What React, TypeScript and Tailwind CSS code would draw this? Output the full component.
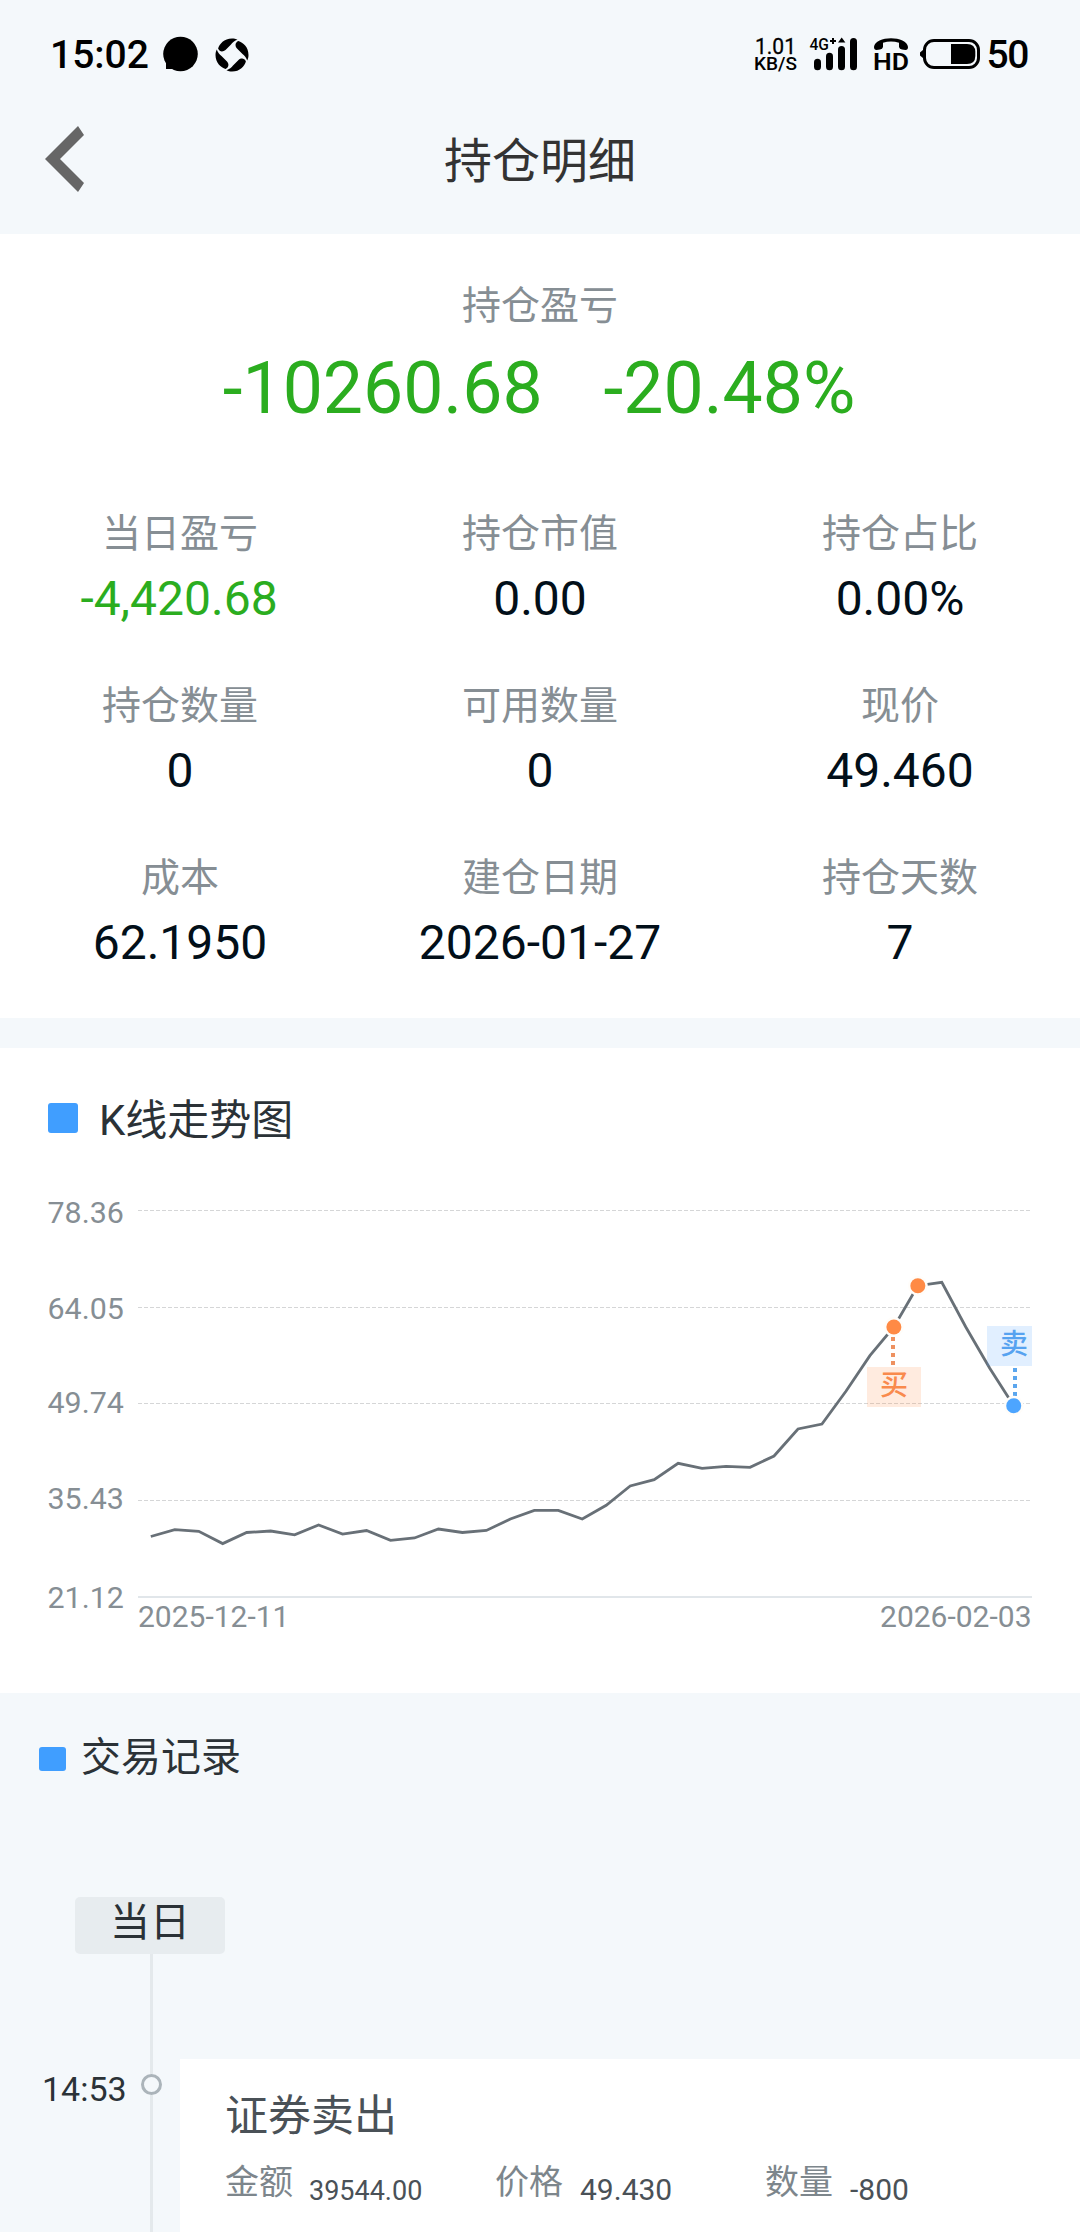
import React from "react";

const FONT = "font-['Roboto','Noto_Sans_CJK_SC',sans-serif]";

type Stat = { label: string; value: string; green?: boolean };

const STATS: Stat[] = [
  { label: "当日盈亏", value: "-4,420.68", green: true },
  { label: "持仓市值", value: "0.00" },
  { label: "持仓占比", value: "0.00%" },
  { label: "持仓数量", value: "0" },
  { label: "可用数量", value: "0" },
  { label: "现价", value: "49.460" },
  { label: "成本", value: "62.1950" },
  { label: "建仓日期", value: "2026-01-27" },
  { label: "持仓天数", value: "7" },
];

// Vertical position of each daily close, one every 24px.
const CLOSES = [
  1536.5, 1529.7, 1531.3, 1543.6, 1532.5, 1531, 1534.9, 1525, 1534.1, 1530.5, 1540.4, 1538, 1529,
  1532.5, 1530.5, 1519, 1510.4, 1510.4, 1519, 1505.3, 1486, 1479.7, 1463.3, 1468.3, 1466.3, 1467.3,
  1456, 1429, 1424, 1391.3, 1355.7, 1327, 1285.7, 1282.3, 1327, 1368.3, 1405.7,
];
const closeX = (i: number) => 150.8 + i * 23.97;

const AXIS = [
  { text: "78.36", base: 1223, line: 1210.5 },
  { text: "64.05", base: 1319, line: 1307.5 },
  { text: "49.74", base: 1413, line: 1403.5 },
  { text: "35.43", base: 1509, line: 1500.5 },
];

function StatusBar() {
  return (
    <div className="flex h-[84px] items-start justify-between pl-[50px] pr-[50px] pt-[30px] text-black">
      <div className="flex h-12 items-center">
        <span className="w-[98px] pt-px text-[39px] font-medium leading-[48px]">15:02</span>
        <svg width="36" height="36" viewBox="0 0 36 36" className="ml-[14px]">
          <circle cx="18.5" cy="18" r="17.3" />
          <path d="M4 22V33H20Z" />
        </svg>
        <svg width="34" height="34" viewBox="-17 -17 34 34" className="ml-[17px] mt-px">
          {[0, 90, 180, 270].map((a) => (
            <path
              key={a}
              transform={`rotate(${a})`}
              d="M5.5-15.2C2.5-14.3 0.5-12.5-1-10.5L-6.5-5C-9-2.8-12.5-3-13.9-6.4C-12.5-11-8-16.5 0-16.5C2-16.5 4-16 5.5-15.2Z"
            />
          ))}
        </svg>
      </div>
      <svg width="280" height="48" viewBox="750 30 280 48" className={FONT}>
        <text x="755" y="54" fontSize="21.5" fontWeight="400" stroke="#000" strokeWidth=".3" textLength="41" lengthAdjust="spacingAndGlyphs">1.01</text>
        <text x="754" y="70" fontSize="18.7" fontWeight="500" textLength="43" lengthAdjust="spacingAndGlyphs">KB/S</text>
        <text x="809.5" y="50" fontSize="17" fontWeight="500" textLength="19.5" lengthAdjust="spacingAndGlyphs">4G</text>
        <path d="M830 41h6M833 38v6" stroke="#000" strokeWidth="2" />
        <path d="M838 42.5L841.7 37.5L845.4 42.5Z" />
        <rect x="814" y="58.7" width="7" height="11.5" rx="3.5" />
        <rect x="826" y="52.7" width="7" height="17.5" rx="3.5" />
        <rect x="838" y="46" width="7" height="24.2" rx="3.5" />
        <rect x="850" y="38" width="7" height="32.2" rx="3.5" />
        <path d="M874 47C875 35.200 907 35.200 908 47Q908 50 905.500 50L902 49.500Q899.500 49 899 47V42.800Q891 40 883 42.800V47Q882.500 49 880 49.500L876.500 50Q874 50 874 47Z" />
        <text x="873" y="70" fontSize="24.5" fontWeight="600" textLength="36" lengthAdjust="spacingAndGlyphs">HD</text>
        <rect x="924.5" y="40.5" width="54" height="27" rx="9.5" fill="none" stroke="#000" strokeWidth="3" />
        <path d="M923.5 49.5L920 52.5V55.5L923.5 58.5Z" />
        <path d="M951 44H967Q975.3 44 975.3 52V56Q975.3 64 967 64H951Z" />
        <text x="986.5" y="67.5" fontSize="39" fontWeight="500" textLength="43">50</text>
      </svg>
    </div>
  );
}

function NavBar() {
  return (
    <div className="grid h-[150px] grid-cols-3 items-center">
      <svg width="39" height="66" viewBox="0 0 39 66" className="ml-[45px]" fill="#666">
        <path d="M33 0L39 9L15 33L39 57L33 66L0 33Z" />
      </svg>
      <h1 className="pt-[5px] text-center text-[48px] leading-[60px] text-[#333]">持仓明细</h1>
    </div>
  );
}

function Summary() {
  return (
    <section className="bg-white pb-[41px] pt-[42px] text-center">
      <div className="text-[39px] leading-[60px] text-[#868e94]">持仓盈亏</div>
      <div className="mt-[11px] flex justify-center gap-[61px] pr-[2px] text-[71.5px] leading-[84px] text-[#2bad1f]">
        <span>-10260.68</span>
        <span>-20.48%</span>
      </div>
      <div className="mt-[73px] grid grid-cols-3 gap-y-[43px]">
        {STATS.map((s) => (
          <div key={s.label}>
            <div className="text-[39px] leading-[60px] text-[#868e94]">{s.label}</div>
            <div
              className={`mt-px text-[48px] leading-[68px] ${s.green ? "pr-[2px] text-[#2bad1f]" : "text-[#020f19]"}`}
            >
              {s.value}
            </div>
          </div>
        ))}
      </div>
    </section>
  );
}

function Marker({ i, color }: { i: number; color: string }) {
  return (
    <>
      <circle cx={closeX(i)} cy={CLOSES[i]} r="10" fill="#fffdfa" />
      <circle cx={closeX(i)} cy={CLOSES[i]} r="7.5" fill={color} />
    </>
  );
}

function PriceChart() {
  const points = CLOSES.map((y, i) => `${closeX(i)},${y}`).join(" ");
  return (
    <svg width="1080" height="545" viewBox="0 1148 1080 545" className={`block ${FONT}`} fontSize="30" fill="#868e94">
      {AXIS.map((a) => (
        <g key={a.text}>
          <text x="47.5" y={a.base} fontSize="30.4">{a.text}</text>
          <line x1="138" x2="1030" y1={a.line} y2={a.line} stroke="#d5d6d7" strokeDasharray="4 2" />
        </g>
      ))}
      <text x="47.5" y="1608" fontSize="30.4">21.12</text>
      <rect x="138" y="1596" width="894" height="2" fill="#e1e6ea" />
      <text x="138" y="1627">2025-12-11</text>
      <text x="1031.5" y="1627" textAnchor="end">2026-02-03</text>
      <polyline points={points} fill="none" stroke="#687077" strokeWidth="2.8" />
      <rect x="867" y="1367" width="54" height="40" fill="#ff8a42" fillOpacity=".17" />
      <rect x="987" y="1326" width="45" height="40" fill="#4ba3ff" fillOpacity=".17" />
      <line x1="893" x2="893" y1="1337" y2="1366" stroke="#ee9160" strokeWidth="4" strokeDasharray="4 4" />
      <line x1="1015" x2="1015" y1="1368" y2="1397" stroke="#5ba6ee" strokeWidth="4" strokeDasharray="4 4" />
      <Marker i={31} color="#ff8a45" />
      <Marker i={32} color="#ff8a45" />
      <Marker i={36} color="#4da5ff" />
      <text x="894" y="1395" fontSize="28" fontWeight="500" fill="#f98a4d" textAnchor="middle">买</text>
      <text x="1014" y="1354" fontSize="28" fontWeight="500" fill="#56a2f0" textAnchor="middle">卖</text>
    </svg>
  );
}

function KLine() {
  return (
    <section className="mt-[30px] bg-white">
      <div className="flex h-[100px] items-start pl-12 pt-[55px]">
        <span className="h-[30px] w-[30px] rounded-[3px] bg-[#409eff]" />
        <h2 className="-mt-[12px] ml-[21px] text-[42px] leading-[60px] text-[#2b3237]">K线走势图</h2>
      </div>
      <PriceChart />
    </section>
  );
}

function Field({ label, value, small }: { label: string; value: string; small?: boolean }) {
  return (
    <div className="flex w-[270px] items-start">
      <span className="text-[34px] leading-[46px] text-[#7d868c]">{label}</span>
      <span
        className={
          small ? "ml-4 pt-[9px] text-[27px] leading-[46px]" : "ml-[17px] pt-[8px] text-[30px] leading-[46px]"
        }
      >
        {value}
      </span>
    </div>
  );
}

function Records() {
  return (
    <section className="flex flex-1 flex-col">
      <div className="flex h-[204px] items-start pl-[39px] pt-[54px]">
        <span className="h-6 w-[27px] rounded-[3px] bg-[#409eff]" />
        <h2 className="-mt-[19px] ml-[15px] text-[40px] leading-[60px] text-[#2b3237]">交易记录</h2>
      </div>
      <div className="ml-[75px] h-[57px] w-[150px] rounded-[5px] bg-[#e7ecef] text-center text-[40px] leading-[52px] text-[#2b3237]">
        当日
      </div>
      <div className="flex flex-1">
        <div className="w-[141px] pl-[42px] pt-[115px] text-[34px] leading-[40px] text-[#2b3237]">14:53</div>
        <div className="flex w-[21px] flex-col items-center">
          <div className="h-[120px] w-[3px] bg-[#e4e9ec]" />
          <div className="h-[21px] w-[21px] rounded-full border-[3px] border-[#abb4ba]" />
          <div className="w-[3px] flex-1 bg-[#e4e9ec]" />
        </div>
        <div className="ml-[18px] mt-[105px] flex-1 bg-white pl-[45px] pt-[27px] text-[#4a5157]">
          <h3 className="text-[43px] leading-[60px]">证券卖出</h3>
          <div className="mt-[13px] flex">
            <Field label="金额" value="39544.00" small />
            <Field label="价格" value="49.430" />
            <Field label="数量" value="-800" />
          </div>
        </div>
      </div>
    </section>
  );
}

export default function App() {
  return (
    <div className={`flex h-[2232px] w-[1080px] flex-col overflow-hidden bg-[#f4f8fb] ${FONT}`}>
      <StatusBar />
      <NavBar />
      <Summary />
      <KLine />
      <Records />
    </div>
  );
}
